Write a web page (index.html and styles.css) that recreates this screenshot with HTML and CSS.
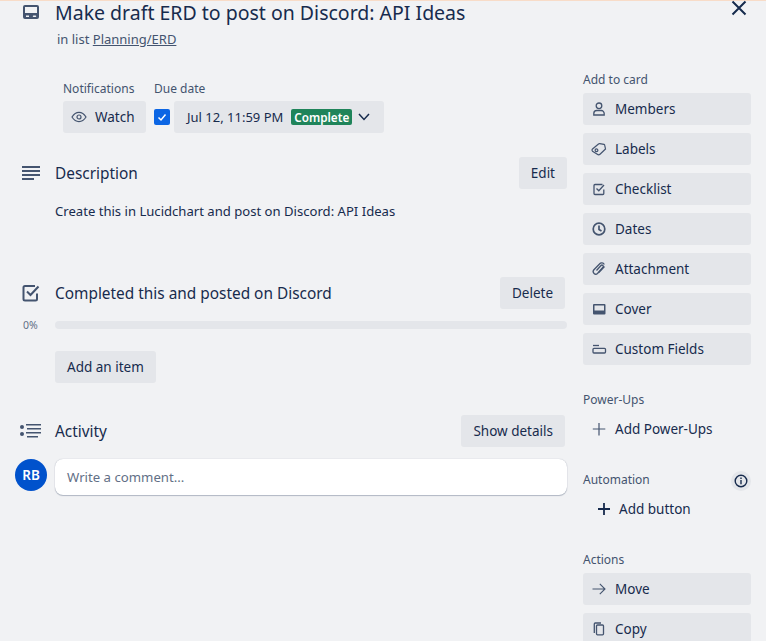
FILE: index.html
```html
<!DOCTYPE html>
<html>
<head>
  <title>Card</title>
  <link rel="stylesheet" href="styles.css">
</head>
<body>

  <div class="card-window">
    <svg class="close-icon" width="16" height="16" viewBox="0 0 16 16"><path d="M1.500 1.500 L14.500 14.500 M14.500 1.500 L1.500 14.500" /></svg>

    <div class="main-col">
      <div class="card-head">
        <svg class="sec-icon" width="18" height="16" viewBox="0 0 18 16"><path fill-rule="evenodd" d="M3 1h12a2 2 0 0 1 2 2v10a2 2 0 0 1-2 2H3a2 2 0 0 1-2-2V3a2 2 0 0 1 2-2zm0 2v6h12V3H3zm1 8.500v1.500h3v-1.500H4zm7.500 0a.750.750 0 1 0 0 1.500h2a.750.750 0 1 0 0-1.500h-2z" /></svg>
        <div>
          <h1>Make draft ERD to post on Discord: API Ideas</h1>
          <p class="in-list">in list <a href="#">Planning/ERD</a></p>
        </div>
      </div>

      <div class="meta-row">
        <div>
          <h3 class="small-label">Notifications</h3>
          <button class="btn watch-btn">
            <svg width="16" height="16" viewBox="0 0 16 16" fill="none" stroke="#44546f" stroke-width="1.200"><path d="M1 8c2-3.200 4.300-4.600 7-4.600s5 1.400 7 4.600c-2 3.200-4.300 4.600-7 4.600S3 11.200 1 8z" /><circle cx="8" cy="8" r="2" /></svg>
            Watch
          </button>
        </div>
        <div>
          <h3 class="small-label">Due date</h3>
          <div class="due-row">
            <span class="check-box">
              <svg width="12" height="12" viewBox="0 0 12 12" fill="none" stroke="#fff" stroke-width="1.500"><path d="M2.500 6.500 L5 9 L9.500 3.500" /></svg>
            </span>
            <button class="btn due-btn">
              Jul 12, 11:59 PM
              <span class="complete-tag">Complete</span>
              <svg class="chevron" width="12" height="8" viewBox="0 0 12 8" fill="none" stroke="#172b4d" stroke-width="1.500"><path d="M1 1 L6 6.500 L11 1" /></svg>
            </button>
          </div>
        </div>
      </div>

      <section class="sec desc-sec">
        <div class="sec-head">
          <svg class="sec-icon" width="18" height="14" viewBox="0 0 18 14"><path d="M0 0h18v2H0zM0 4h18v2H0zM0 8h18v2H0zM0 12h12v2H0z" /></svg>
          <h2>Description</h2>
          <button class="btn">Edit</button>
        </div>
        <p class="desc-text">Create this in Lucidchart and post on Discord: API Ideas</p>
      </section>

      <section class="sec check-sec">
        <div class="sec-head">
          <svg class="sec-icon" width="18" height="18" viewBox="0 0 18 18" fill="none" stroke="#44546f" stroke-width="2"><path d="M15 9.500V15a1.500 1.500 0 0 1-1.500 1.500H3A1.500 1.500 0 0 1 1.500 15V3.500A1.500 1.500 0 0 1 3 2h10" /><path d="M5 7.500 L8.500 11 L16.500 2.500" /></svg>
          <h2>Completed this and posted on Discord</h2>
          <button class="btn">Delete</button>
        </div>
        <div class="progress-row">
          <span class="pct">0%</span>
          <div class="progress-bar"></div>
        </div>
        <button class="btn add-item">Add an item</button>
      </section>

      <section class="sec activity-sec">
        <div class="sec-head">
          <svg class="sec-icon activity-icon" width="21" height="15" viewBox="0 0 21 15"><circle cx="2" cy="3" r="2" /><circle cx="2" cy="10" r="2" /><path d="M6 0h15v1.600H6zM7 4h14v1.600H7zM6 8h15v1.600H6zM7 12h11v1.600H7z" /></svg>
          <h2>Activity</h2>
          <button class="btn">Show details</button>
        </div>
        <div class="comment-row">
          <span class="avatar">RB</span>
          <div class="comment-box">Write a comment...</div>
        </div>
      </section>
    </div>

    <aside class="side-col">
      <h3 class="small-label">Add to card</h3>
      <button class="btn side-btn">
        <svg width="16" height="16" viewBox="0 0 16 16" fill="none" stroke="#44546f" stroke-width="1.300"><circle cx="8" cy="4.800" r="2.800" /><path d="M2.800 14v-1.500a3 3 0 0 1 3-3h4.400a3 3 0 0 1 3 3V14z" /></svg>
        Members
      </button>
      <button class="btn side-btn">
        <svg width="16" height="16" viewBox="0 0 16 16" fill="none" stroke="#44546f" stroke-width="1.200"><path d="M1.500 8 L7.500 3 a1.500 1.500 0 0 1 1.200-.300 L13 3.400 a1 1 0 0 1 .700.800 L14.500 8 L9 13.200 a2 2 0 0 1-2.700 0 L1.500 10.200 a1.500 1.500 0 0 1 0-2.200z" /><circle cx="5.500" cy="9.300" r="1.400" /></svg>
        Labels
      </button>
      <button class="btn side-btn">
        <svg width="16" height="16" viewBox="0 0 16 16" fill="none" stroke="#44546f" stroke-width="1.300"><path d="M12.800 8.500v4a1 1 0 0 1-1 1H4a1 1 0 0 1-1-1v-8a1 1 0 0 1 1-1h7.500" /><path d="M5.500 7.500 L7.800 9.800 L13 4" /></svg>
        Checklist
      </button>
      <button class="btn side-btn">
        <svg width="16" height="16" viewBox="0 0 16 16" fill="none" stroke="#44546f" stroke-width="1.700"><circle cx="8" cy="8" r="5.800" /><path d="M8 4.500V8.500L10.500 10" /></svg>
        Dates
      </button>
      <button class="btn side-btn">
        <svg width="16" height="16" viewBox="0 0 16 16" fill="none" stroke="#44546f" stroke-width="1.300"><path d="M5.500 9.500 L10 4.500 a1.300 1.300 0 0 1 2 1.800 L6.500 12.500 a2.600 2.600 0 0 1-3.800-3.500 L8.500 3 a2.900 2.900 0 0 1 4.800 .500" /><path d="M7.800 11.500 L13.500 5.500" /></svg>
        Attachment
      </button>
      <button class="btn side-btn">
        <svg width="16" height="16" viewBox="0 0 16 16"><path fill="#44546f" fill-rule="evenodd" d="M3 3h10.500a1 1 0 0 1 1 1v8.500a1 1 0 0 1-1 1H3a1 1 0 0 1-1-1V4a1 1 0 0 1 1-1zm.500 1.500v5h9.500v-5H3.500z" /></svg>
        Cover
      </button>
      <button class="btn side-btn">
        <svg width="16" height="16" viewBox="0 0 16 16" fill="none" stroke="#44546f" stroke-width="1.300"><path d="M2 4.500h6" /><rect x="2" y="7.300" width="12.500" height="4.700" rx="1" /></svg>
        Custom Fields
      </button>

      <h3 class="small-label group-label">Power-Ups</h3>
      <button class="btn side-btn plain">
        <svg width="16" height="16" viewBox="0 0 16 16" fill="none" stroke="#44546f" stroke-width="1.200"><path d="M8 2v12.500M1.800 8h12.500" /></svg>
        Add Power-Ups
      </button>

      <div class="auto-head">
        <h3 class="small-label">Automation</h3>
        <span class="info-btn">
          <svg width="14" height="14" viewBox="0 0 14 14" fill="none" stroke="#172b4d" stroke-width="1.400"><circle cx="7" cy="7" r="5.800" /><path d="M7 6v4.200" /><path d="M7 3.500v1.500" /></svg>
        </span>
      </div>
      <button class="btn side-btn plain add-button">
        <svg width="14" height="14" viewBox="0 0 14 14" fill="none" stroke="#172b4d" stroke-width="1.800"><path d="M7 1v12M1 7h12" /></svg>
        Add button
      </button>

      <h3 class="small-label group-label">Actions</h3>
      <button class="btn side-btn">
        <svg width="16" height="16" viewBox="0 0 16 16" fill="none" stroke="#44546f" stroke-width="1.100"><path d="M1.500 8h12.500M8.800 2.800 L14 8 L8.800 13.200" /></svg>
        Move
      </button>
      <button class="btn side-btn">
        <svg width="16" height="16" viewBox="0 0 16 16" fill="none" stroke="#44546f" stroke-width="1.300"><rect x="5.500" y="4" width="7" height="9.800" rx="1" /><path d="M3.300 12V3a1 1 0 0 1 1-1H10" /></svg>
        Copy
      </button>
    </aside>
  </div>

</body>
</html>
```

FILE: styles.css
```css
* {
  box-sizing: border-box;
}

html, body {
  height: 100%;
}

body {
  margin: 0;
  overflow: hidden;
  background: #f1f2f4;
  color: #172b4d;
  font-family: 'Noto Sans', 'Open Sans', sans-serif;
  font-size: 14px;
  line-height: 20px;
}

.card-window {
  position: relative;
  display: flex;
  height: 100%;
  border-top: 1px solid #f8dcc8;
  padding-left: 15px;
}

.close-icon {
  position: absolute;
  top: -1px;
  right: 19px;
  fill: none;
  stroke: #172b4d;
  stroke-width: 2;
}

h1, h2, h3, p {
  margin: 0;
}

.main-col {
  width: 552px;
  flex: none;
}

.card-head {
  display: flex;
  height: 80px;
}

.card-head .sec-icon {
  margin: 3px 0 0 7px;
}

.card-head > div {
  margin-left: 15px;
}

h1 {
  font-size: 19.500px;
  font-weight: 450;
  line-height: 24px;
}

.in-list {
  margin: 4px 0 0 2px;
  color: #44546f;
  font-size: 13px;
}

.in-list a {
  color: #44546f;
}

.meta-row {
  display: flex;
  gap: 8px;
  margin-left: 48px;
}

.meta-row .small-label {
  margin-bottom: 4px;
}

.small-label {
  color: #44546f;
  font-size: 12px;
  font-weight: 450;
  line-height: 16px;
  margin-bottom: 5px;
}

.btn {
  display: flex;
  align-items: center;
  height: 32px;
  padding: 0 12px;
  border: 0;
  border-radius: 3px;
  background: #e4e6ea;
  color: #172b4d;
  font-family: inherit;
  font-size: 13.500px;
  font-weight: 450;
  white-space: nowrap;
}

.watch-btn {
  width: 83px;
  gap: 8px;
  padding: 0 8px;
}

.due-row {
  display: flex;
  align-items: center;
  gap: 4px;
}

.check-box {
  display: flex;
  align-items: center;
  justify-content: center;
  width: 16px;
  height: 16px;
  border-radius: 2px;
  background: #0c66e4;
}

.due-btn {
  width: 210px;
  padding-left: 13px;
  font-size: 13px;
  font-weight: 400;
}

.complete-tag {
  margin: 0 6px 0 8px;
  padding: 0 3px;
  border-radius: 2px;
  background: #1f845a;
  color: #fff;
  font-size: 11.700px;
  font-weight: 600;
  line-height: 16px;
}

.chevron {
  flex: none;
}

.sec-head {
  position: relative;
  display: flex;
  align-items: center;
  justify-content: space-between;
  height: 32px;
  padding-left: 40px;
}

.sec-head .sec-icon {
  position: absolute;
  left: 7px;
}

.sec-head .activity-icon {
  left: 5px;
}

.sec-head h2 {
  padding-top: 1px;
  font-size: 15.400px;
  font-weight: 450;
}

.sec-icon {
  flex: none;
  fill: #44546f;
}

.sec {
  position: relative;
}

.desc-sec {
  margin-top: 24px;
}

.desc-text {
  margin: 12px 0 0 40px;
  font-size: 13.100px;
  color: #172b4d;
}

.check-sec {
  margin-top: 56px;
}

.check-sec .sec-head, .activity-sec .sec-head {
  padding-right: 2px;
}

.check-sec .sec-icon {
  fill: none;
}

.progress-row {
  position: relative;
  margin: 12px 0 0 40px;
}

.pct {
  position: absolute;
  left: -32px;
  top: -4px;
  font-size: 10.500px;
  line-height: 16px;
  color: #626f86;
}

.progress-bar {
  height: 8px;
  border-radius: 4px;
  background: #e4e6ea;
}

.add-item {
  margin: 22px 0 0 40px;
}

.activity-sec {
  margin-top: 32px;
}

.comment-row {
  display: flex;
  gap: 8px;
  margin-top: 12px;
}

.avatar {
  display: flex;
  align-items: center;
  justify-content: center;
  width: 32px;
  height: 32px;
  border-radius: 50%;
  background: #0052cc;
  color: #fff;
  font-size: 13.500px;
  font-weight: 600;
}

.comment-box {
  flex: 1;
  height: 36px;
  padding: 8px 12px;
  border-radius: 8px;
  background: #fff;
  box-shadow: 0 1px 1px #091e4240, 0 0 1px #091e424f;
  color: #626f86;
  font-size: 13.200px;
}

.side-col {
  width: 168px;
  margin-left: 16px;
  flex: none;
  padding-top: 71px;
}

.side-btn {
  width: 100%;
  gap: 8px;
  padding: 0 8px;
  margin-bottom: 8px;
  flex: none;
}

.plain {
  background: transparent;
}

.group-label {
  margin-top: 27px;
}

.auto-head {
  position: relative;
  margin-top: 27px;
}

.info-btn {
  position: absolute;
  right: 0;
  top: -1px;
  display: flex;
  align-items: center;
  justify-content: center;
  width: 20px;
  height: 20px;
  border-radius: 50%;
  background: #e4e6ea;
}

.add-button {
  padding-left: 14px;
  gap: 8px;
}
```
